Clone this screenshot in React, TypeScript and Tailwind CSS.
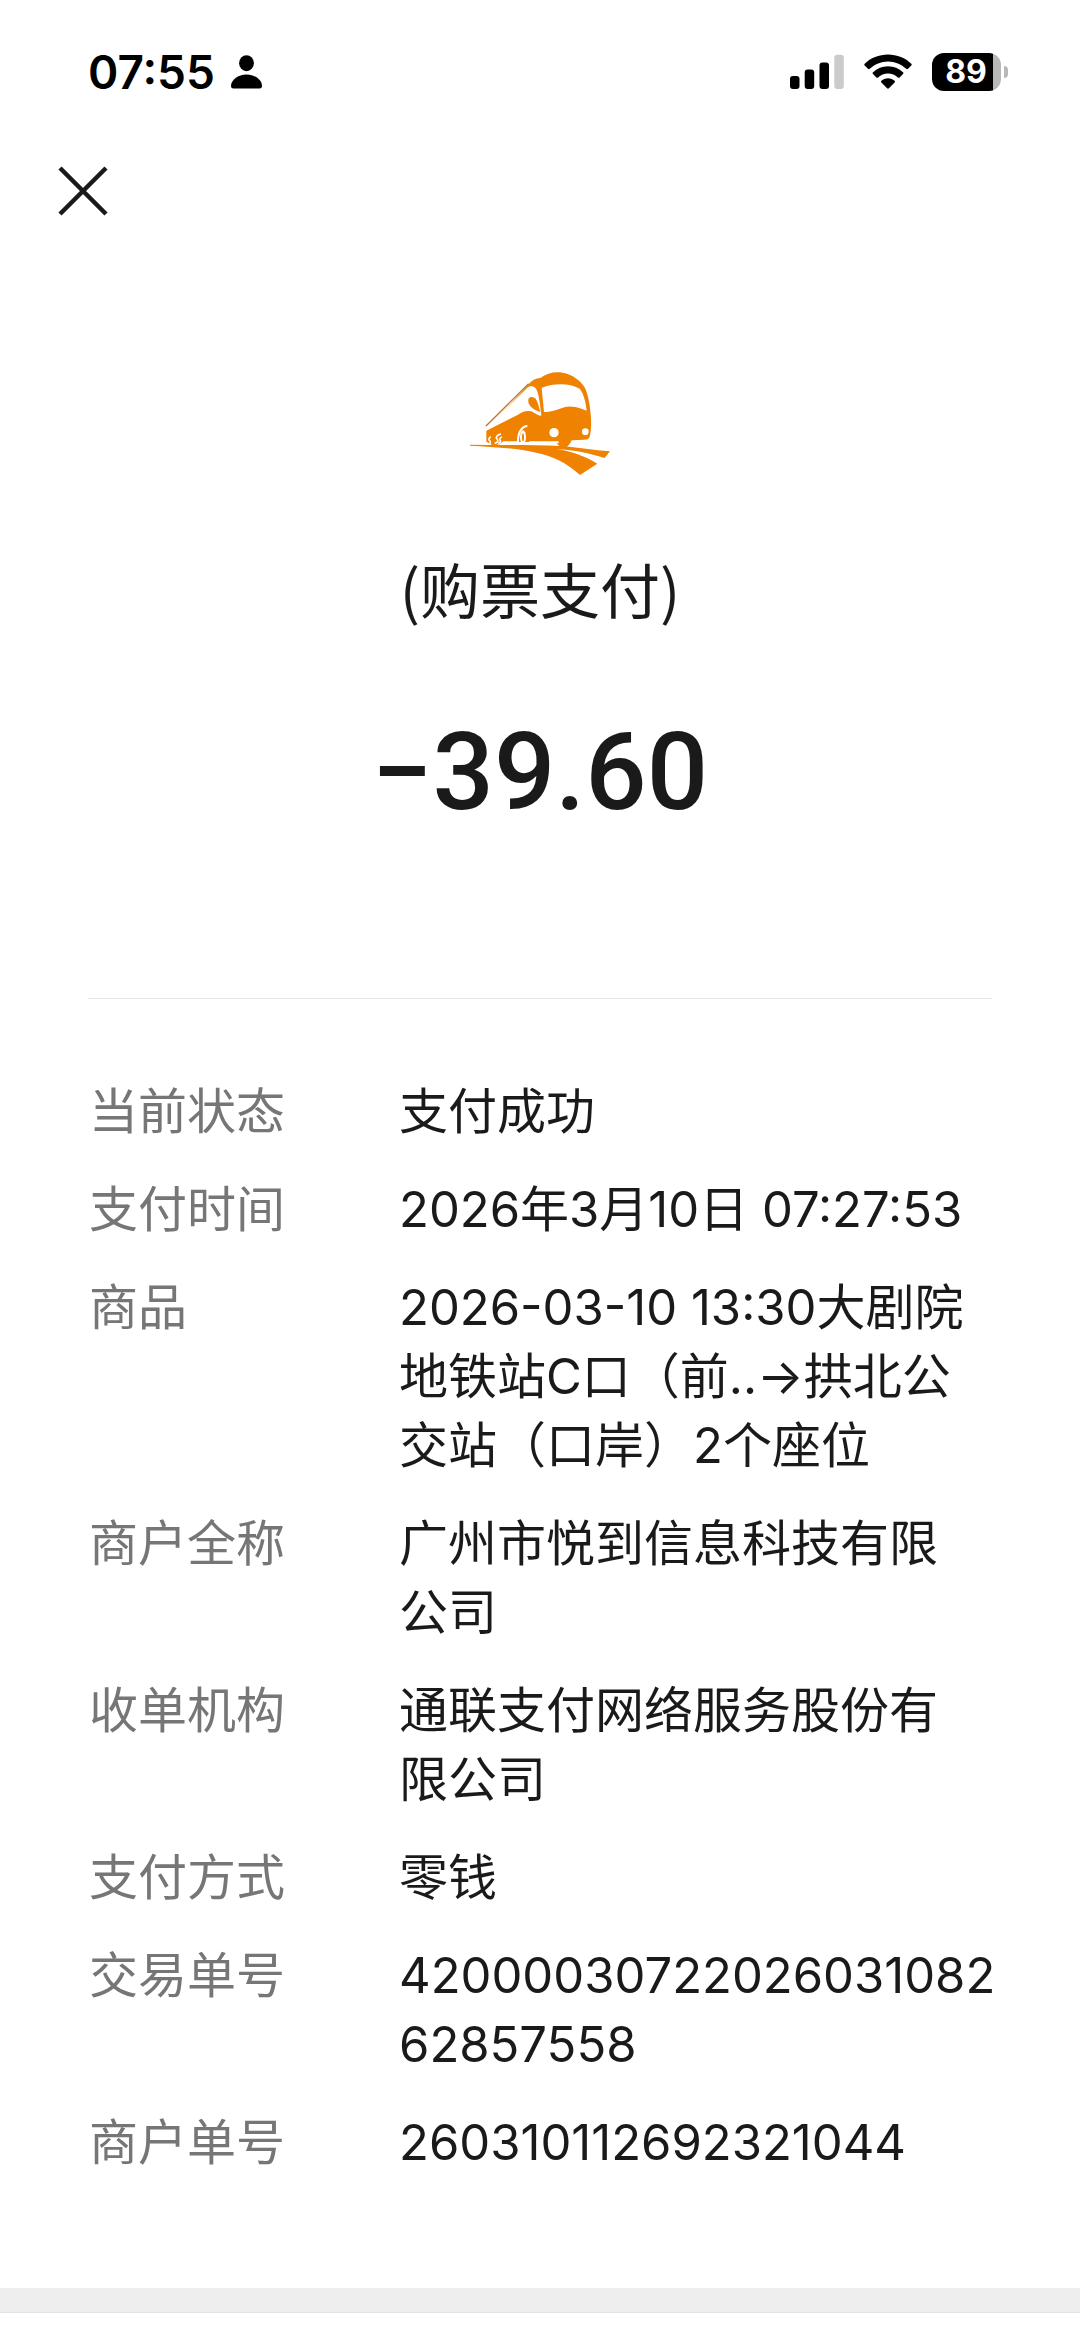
import type { ReactNode } from "react";

type Detail = {
  label: string;
  lines: string[];
};

const details: Detail[] = [
  { label: "当前状态", lines: ["支付成功"] },
  { label: "支付时间", lines: ["2026年3月10日 07:27:53"] },
  { label: "商品", lines: ["2026-03-10 13:30大剧院", "地铁站C口（前..→拱北公", "交站（口岸）2个座位"] },
  { label: "商户全称", lines: ["广州市悦到信息科技有限", "公司"] },
  { label: "收单机构", lines: ["通联支付网络服务股份有", "限公司"] },
  { label: "支付方式", lines: ["零钱"] },
  { label: "交易单号", lines: ["42000030722026031082", "62857558"] },
  { label: "商户单号", lines: ["260310112692321044"] },
];

const PersonIcon = () => (
  <svg viewBox="0 0 31 34" className="h-[34px] w-[31px]" fill="currentColor" aria-hidden="true">
    <ellipse cx="15.5" cy="8.2" rx="7.4" ry="8" />
    <path d="M15.5 19.5C24 19.5 31 25 31 31c0 1.600-.8 2.500-2.400 2.500H2.400C.8 33.500 0 32.600 0 31c0-6 7-11.500 15.500-11.500z" />
  </svg>
);

const SignalIcon = () => (
  <svg viewBox="0 0 54 36" className="h-9 w-[54px]" fill="currentColor" aria-hidden="true">
    <rect x="0" y="22" width="9.500" height="13" rx="3" />
    <rect x="14.700" y="15.500" width="9.500" height="19.500" rx="3" />
    <rect x="29.500" y="8.500" width="9.500" height="26.500" rx="3" />
    <rect x="44.300" y="0.800" width="9.500" height="34.200" rx="3" fill="#cbcbcb" />
  </svg>
);

const WifiIcon = () => (
  <svg viewBox="0 0 48 36" className="h-9 w-12" fill="currentColor" aria-hidden="true">
    <path d="M24 .5C33 .5 41.500 4 47.300 9.700c.6.6.6 1.200 0 1.800l-3.300 3.300c-.6.6-1.200.6-1.800 0C37.300 10.200 31 7.400 24 7.400S10.700 10.200 5.800 14.800c-.6.6-1.200.6-1.800 0L.7 11.500c-.6-.6-.6-1.200 0-1.800C6.500 4 15 .5 24 .5z" />
    <path d="M24 12.300c5.800 0 11 2.200 15 5.900.6.6.6 1.200 0 1.800l-3.400 3.400c-.6.6-1.200.6-1.800 0-2.600-2.400-6-3.900-9.800-3.900s-7.200 1.500-9.800 3.900c-.6.6-1.200.6-1.800 0L9 20c-.6-.6-.6-1.200 0-1.800 4-3.700 9.200-5.900 15-5.900z" />
    <path d="M24 24.300c2.500 0 4.800.9 6.600 2.500.6.6.6 1.200 0 1.800l-5.700 5.700c-.6.6-1.200.6-1.800 0l-5.700-5.700c-.6-.6-.6-1.200 0-1.800 1.800-1.600 4.100-2.500 6.600-2.500z" />
  </svg>
);

const Battery = ({ level }: { level: number }) => (
  <div className="flex items-center gap-[3px]">
    <div
      className="flex h-[38px] w-[69px] items-center justify-center rounded-xl pr-px text-[32px] leading-none font-bold text-white"
      style={{ background: `linear-gradient(to right, #000 ${level}%, #b8b8b8 ${level}%)` }}
    >
      {level}
    </div>
    <div className="h-3 w-1 rounded-r-full bg-[#b8b8b8]" />
  </div>
);

const BusLogo = () => (
  <svg viewBox="0 0 540 420" className="h-[140px] w-[180px]" fill="#ef8200" role="img" aria-label="巴士">
    {/* body */}
    <path d="M109 240L235 104c10-13 22-20 36-20 24-18 54-22 82-12 24 9 42 24 52 42 10 22 15 50 18 90 1 22 0 42-4 56-3 7-9 9-18 9l-36 2c-4 9-10 17-18 22h-10c-9-4-15-10-19-17H157c-6 6-12 9-20 9h-10l-18-10z" />
    {/* side windows */}
    <path d="M100 244L232 113c10-7 20-5 25 2 9 12 13 44 17 82-14-9-26-14-40-14-11 0-20 5-30 11l-95 48z" fill="#fff" />
    <path d="M108 228L236 101" fill="none" stroke="#b97a35" strokeWidth="4" />
    {/* windscreen */}
    <path d="M275 113c38-14 84-14 114 3 12 15 18 38 21 66-16-6-30-12-45-12-28-2-50 18-83 16z" fill="#fff" />
    {/* mirror */}
    <path d="M240 142c11-4 19 4 23 16 3 9 6 19 8 28-17-4-31-15-35-26-2-8-2-14 4-18z" />
    <path d="M236 172c8 10 20 18 36 24" fill="none" stroke="#fff" strokeWidth="5" />
    {/* wheels */}
    <path d="M204 279c-1-29 7-47 28-52" fill="none" stroke="#fff" strokeWidth="6" />
    <ellipse cx="219" cy="261" rx="9" ry="20" fill="#fff" />
    <ellipse cx="219" cy="262" rx="3" ry="12" />
    <path d="M122 260c-6 5-7 9-3 12 4 4 2 9-4 10M153 252c-11 2-17 9-12 15 5 5 2 11-7 13M156 261c-8 3-8 7-5 11 2 4-1 7-7 8" fill="none" stroke="#fff" strokeWidth="5" />
    <path d="M158 277h44M238 277h88" fill="none" stroke="#fff" strokeWidth="6" />
    {/* headlights */}
    <circle cx="312" cy="248" r="14" fill="#fff" />
    <circle cx="406" cy="245" r="10" fill="#fff" />
    {/* road */}
    <path d="M60 284c96 1 192 0 270 4 56 4 100 13 150 16l-16 20c-48-14-89-24-144-27 46 7 86 22 122 44l-52 34c-37-35-81-57-131-67-61-14-131-17-199-21z" />
  </svg>
);

const StatusBar = () => (
  <div className="flex h-36 items-center justify-between pr-[72px] pl-[88px] text-black">
    <div className="flex items-center gap-4">
      <span className="text-[46px] leading-none font-semibold">07:55</span>
      <PersonIcon />
    </div>
    <div className="flex items-center gap-5">
      <SignalIcon />
      <WifiIcon />
      <Battery level={89} />
    </div>
  </div>
);

const Row = ({ label, children }: { label: string; children: ReactNode }) => (
  <div className="flex">
    <dt className="w-[310px] shrink-0 text-[#767676]">{label}</dt>
    <dd className="whitespace-nowrap">{children}</dd>
  </div>
);

const App = () => {
  return (
    <main className="bg-white font-['Inter','Noto_Sans_CJK_SC',sans-serif] text-[#1a1a1a]">
      <StatusBar />
      <div className="flex px-[58px] pt-[22px]">
        <button type="button" aria-label="关闭">
          <svg viewBox="0 0 50 50" className="h-[50px] w-[50px]" fill="none" stroke="currentColor" strokeWidth="4.5" aria-hidden="true">
            <path d="M2 2L48 48M48 2L2 48" />
          </svg>
        </button>
      </div>

      <section className="flex flex-col items-center pt-[134px]">
        <BusLogo />
        <h1 className="mt-[58px] font-['Noto_Sans_CJK_SC',sans-serif] text-[60px] leading-[80px]">(购票支付)</h1>
        <p className="mt-[84px] font-['Roboto',sans-serif] text-[108px] leading-[120px] font-medium">−39.60</p>
      </section>

      <dl className="mx-[88px] mt-[166px] flex flex-col gap-[29px] border-t border-[#e4e4e4] pt-[78px] pb-[111px] pl-px text-[49px] leading-[69px]">
        {details.map((item) => (
          <Row key={item.label} label={item.label}>
            {item.lines.map((line) => (
              <span key={line} className="block">
                {line}
              </span>
            ))}
          </Row>
        ))}
      </dl>

      <div className="h-[25px] border-b border-[#e4e4e4] bg-[#eee]" />
    </main>
  );
};

export default App;
